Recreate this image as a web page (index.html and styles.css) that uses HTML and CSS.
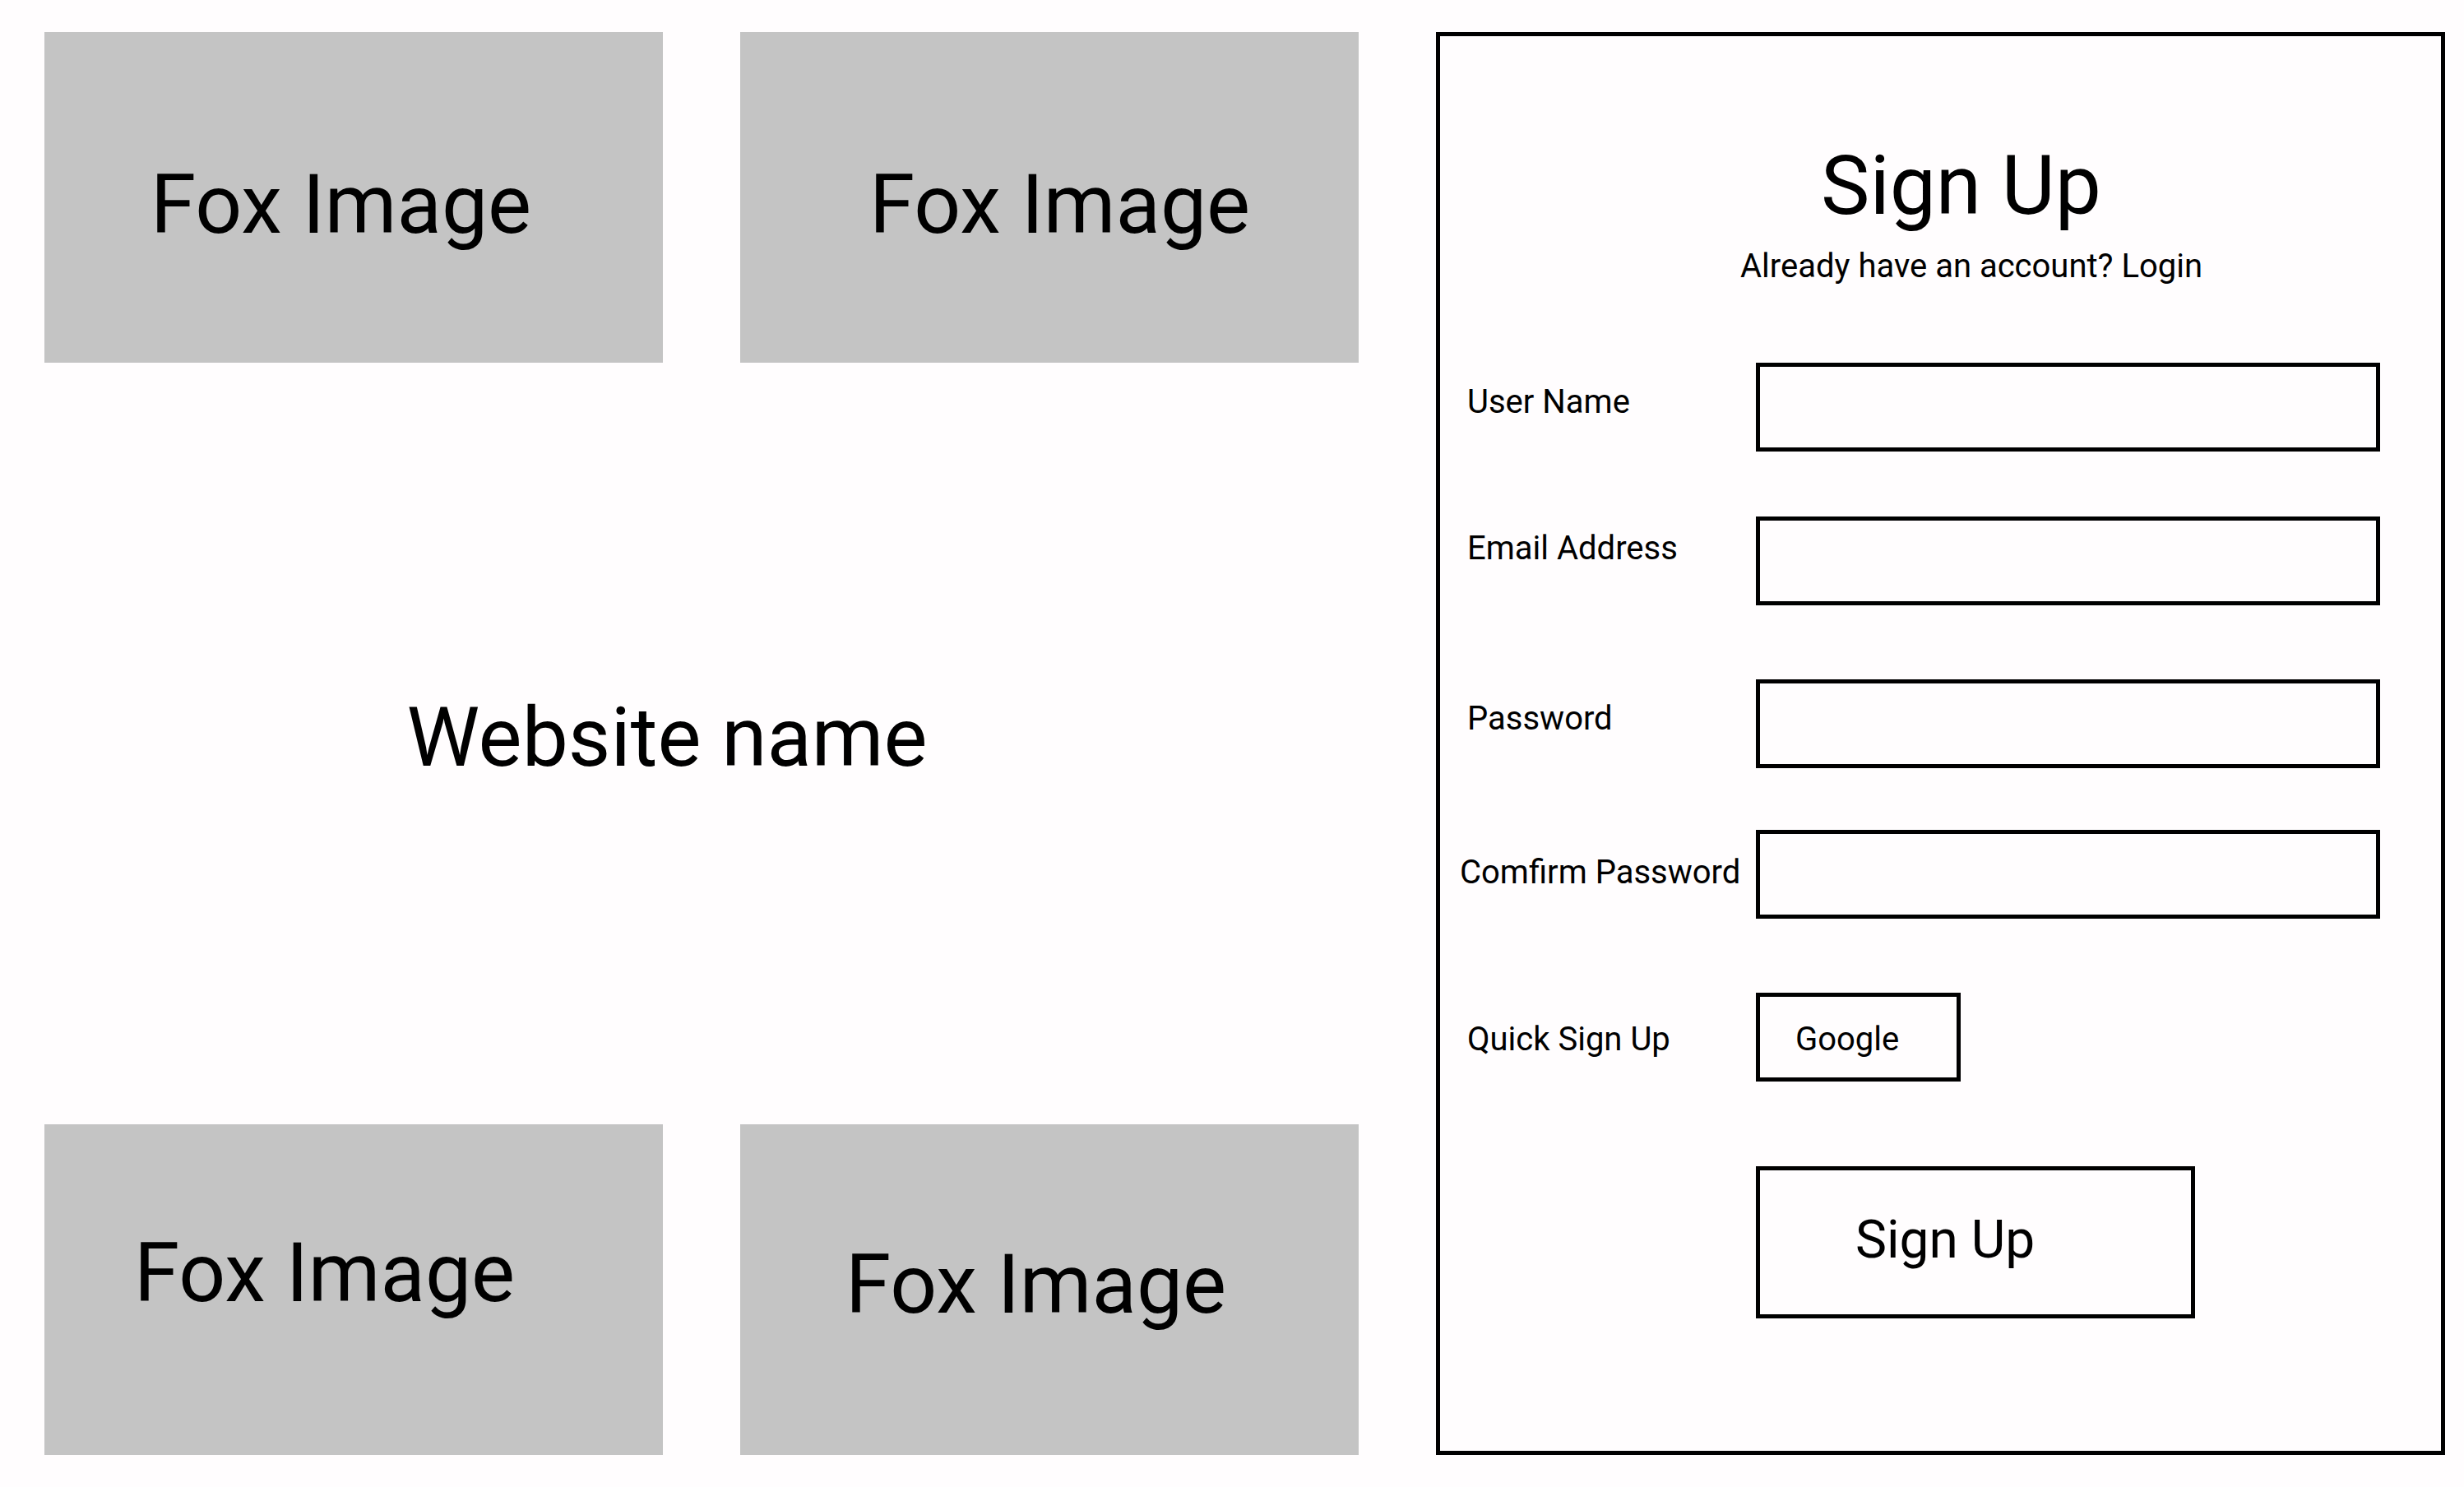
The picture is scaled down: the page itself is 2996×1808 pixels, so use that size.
FILE: index.html
```html
<!DOCTYPE html>
<html lang="en">
<head>
  <meta charset="utf-8">
  <meta name="viewport" content="width=device-width, initial-scale=1">
  <title>Sign Up</title>
  <link rel="stylesheet" href="styles.css">
</head>
<body>
  <main class="page">
    <section class="gallery">
      <div class="tile tile-top-start">Fox Image</div>
      <div class="tile tile-top-end">Fox Image</div>
      <p class="site-name">Website name</p>
      <div class="tile tile-bottom-start">Fox Image</div>
      <div class="tile tile-bottom-end">Fox Image</div>
    </section>

    <section class="panel">
      <header class="panel-header">
        <h1 class="title">Sign Up</h1>
        <p class="subtitle">Already have an account? <a class="link" href="#login">Login</a></p>
      </header>
      <form class="form">
        <div class="row row-user">
          <label class="label" for="username">User Name</label>
          <input class="field" id="username" type="text">
        </div>
        <div class="row row-email">
          <label class="label label-high" for="email">Email Address</label>
          <input class="field" id="email" type="email">
        </div>
        <div class="row row-password">
          <label class="label" for="password">Password</label>
          <input class="field" id="password" type="password">
        </div>
        <div class="row row-confirm">
          <label class="label label-wide" for="confirm">Comfirm Password</label>
          <input class="field" id="confirm" type="password">
        </div>
        <div class="row row-quick">
          <span class="label label-low" id="quick">Quick Sign Up</span>
          <button class="button button-google" type="button" aria-describedby="quick">Google</button>
        </div>
        <div class="row">
          <button class="button button-submit" type="submit">Sign Up</button>
        </div>
      </form>
    </section>
  </main>
</body>
</html>
```
FILE: styles.css
```css
* {
  box-sizing: border-box;
}

body {
  margin: 0;
  background: #fffdfe;
  color: #000;
  font-family: Roboto, "Liberation Sans", sans-serif;
  font-size: 40px;
  line-height: 47px;
}

.page {
  display: grid;
  grid-template-columns: minmax(0, 1598fr) minmax(0, 1227fr);
  gap: 94px;
  min-height: 100vh;
  padding: 39px 23px 39px 54px;
}

/* Image tiles around the site name */
.gallery {
  display: grid;
  grid-template-columns: 1fr 1fr;
  grid-template-rows: 402px 1fr 402px;
  column-gap: 94px;
}

.tile,
.site-name,
.title {
  margin: 0;
  font-size: 100px;
  font-weight: 400;
  line-height: 117px;
}

.tile {
  background: #c4c4c4;
}

.tile-top-start {
  padding: 151px 0 0 129px;
}

.tile-top-end {
  padding: 151px 0 0 157px;
}

.tile-bottom-start {
  padding: 122px 0 0 109px;
}

.tile-bottom-end {
  padding: 136px 0 0 128px;
}

.site-name {
  grid-column: 1 / -1;
  align-self: center;
  padding-right: 84px;
  padding-bottom: 16px;
  text-align: center;
}

/* Sign-up panel */
.panel {
  padding: 123px 74px 64px 24px;
  border: 5px solid #000;
}

.panel-header {
  margin-bottom: 94px;
}

.title {
  padding-left: 439px;
}

.subtitle {
  margin: 16px 0 0;
  padding-left: 341px;
}

.link {
  color: inherit;
  text-decoration: none;
}

.row {
  display: grid;
  grid-template-columns: 360px minmax(0, 1fr);
  align-items: start;
}

.row-user {
  margin-bottom: 79px;
}

.row-email,
.row-confirm {
  margin-bottom: 90px;
}

.row-password {
  margin-bottom: 75px;
}

.row-quick {
  margin-bottom: 103px;
}

.label {
  padding: 24px 0 0 9px;
  white-space: nowrap;
}

.label-high {
  padding-top: 15px;
}

.label-wide {
  padding: 28px 0 0;
}

.label-low {
  padding-top: 33px;
}

.field,
.button {
  height: 108px;
  margin: 0;
  border: 5px solid #000;
  border-radius: 0;
  background: transparent;
  color: inherit;
  font: inherit;
}

.field {
  width: 100%;
  padding: 0 24px;
}

.button {
  grid-column: 2;
  justify-self: start;
  text-align: left;
}

.button-google {
  width: 249px;
  padding: 4px 0 0 43px;
}

.button-submit {
  width: 534px;
  height: 185px;
  padding: 0 0 6px 116px;
  font-size: 64px;
  line-height: 75px;
}
```
